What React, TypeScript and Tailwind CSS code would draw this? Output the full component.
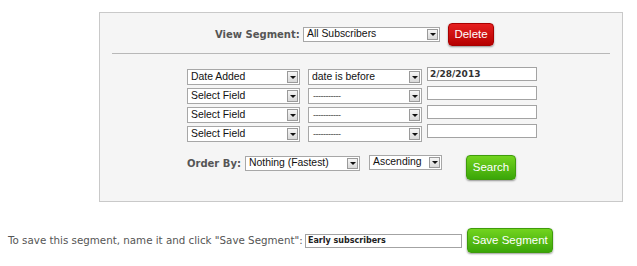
import React from "react";

function Sel({ w, h = 16, text, dash = false }: { w: number; h?: number; text: string; dash?: boolean }) {
  return (
    <div
      className="relative flex items-center border border-[#a7a7a7] bg-white box-border shrink-0"
      style={{ width: w, height: h }}
    >
      {dash ? (
        <span className="pl-[4px] text-[9px] leading-none text-[#444] tracking-[-0.5px]" style={{ fontFamily: '"Liberation Sans", Arial, sans-serif' }}>
          -----------
        </span>
      ) : (
        <span className="pl-[3px] text-[10.4px] leading-none text-[#111] whitespace-nowrap" style={{ fontFamily: '"Liberation Sans", Arial, sans-serif' }}>
          {text}
        </span>
      )}
      <div className="absolute right-[1px] top-[1px] bottom-[1px] w-[11px] border border-[#9a9a9a] bg-gradient-to-b from-[#f6f6f6] to-[#d9d9d9] flex items-center justify-center box-border">
        <div className="w-0 h-0 border-l-[3px] border-r-[3px] border-t-[3px] border-l-transparent border-r-transparent border-t-[#111]" />
      </div>
    </div>
  );
}

function Inp({ w, text }: { w: number; text?: string }) {
  return (
    <div
      className="h-[14px] border border-[#a3a3a3] bg-white box-border flex items-center shrink-0 -mt-[2px]"
      style={{ width: w }}
    >
      {text && (
        <span className="pl-[2px] text-[9px] font-bold leading-none text-[#333]" style={{ fontFamily: '"DejaVu Sans", Verdana, sans-serif' }}>
          {text}
        </span>
      )}
    </div>
  );
}

export default function App() {
  const arial = { fontFamily: '"Liberation Sans", Arial, sans-serif' };
  const verd = { fontFamily: '"DejaVu Sans", Verdana, sans-serif' };
  return (
    <div className="w-[637px] h-[266px] bg-white overflow-hidden pt-[12px]">
      <div className="ml-[99px] w-[524px] h-[190px] border border-[#c9c9c9] bg-[#f5f5f5] flex flex-col">
        <div className="flex items-center pl-[115px] mt-[10px] h-[23px]">
          <span className="text-[10px] font-bold text-[#555] whitespace-nowrap w-[84px]" style={verd}>
            View Segment:
          </span>
          <div className="ml-[4px]">
            <Sel w={137} h={15} text="All Subscribers" />
          </div>
          <div
            className="ml-[8px] w-[46px] h-[23px] rounded-[4px] border border-[#a80000] bg-gradient-to-b from-[#e61e1e] to-[#b50000] shadow-[0_1px_2px_rgba(0,0,0,0.4)] flex items-center justify-center text-white text-[11.5px]"
            style={arial}
          >
            Delete
          </div>
        </div>
        <div className="ml-[12px] w-[498px] h-px bg-[#b8b8b8] mt-[7px]" />
        <div className="flex flex-col gap-[3px] pl-[87px] mt-[15px]">
          <div className="flex items-start">
            <Sel w={113} text="Date Added" />
            <div className="ml-[8px]"><Sel w={114} text="date is before" /></div>
            <div className="ml-[5px]"><Inp w={110} text="2/28/2013" /></div>
          </div>
          {[0, 1, 2].map((i) => (
            <div key={i} className="flex items-start">
              <Sel w={113} text="Select Field" />
              <div className="ml-[8px]"><Sel w={114} text="" dash /></div>
              <div className="ml-[5px]"><Inp w={110} /></div>
            </div>
          ))}
        </div>
        <div className="flex items-start pl-[87px] mt-[13px]">
          <span className="mt-[1px] h-[15px] leading-[15px] w-[53px] text-[10px] font-bold text-[#555] whitespace-nowrap" style={verd}>
            Order By:
          </span>
          <div className="ml-[5px] mt-[1px]"><Sel w={115} h={15} text="Nothing (Fastest)" /></div>
          <div className="ml-[9px] mt-[0px]"><Sel w={73} h={15} text="Ascending" /></div>
          <div
            className="ml-[24px] w-[50px] h-[25px] rounded-[4px] border border-[#3f9c0c] bg-gradient-to-b from-[#72d41e] to-[#3aa608] shadow-[0_1px_2px_rgba(0,0,0,0.4)] flex items-center justify-center text-white text-[11.5px]"
            style={arial}
          >
            Search
          </div>
        </div>
      </div>
      <div className="flex items-center pl-[8px] mt-[26px] h-[25px]">
        <span className="w-[294px] shrink-0 text-[10.3px] text-[#555] whitespace-nowrap" style={verd}>
          To save this segment, name it and click "Save Segment":
        </span>
        <div className="ml-[3px] shrink-0 w-[157px] h-[14px] border border-[#a3a3a3] bg-white flex items-center box-border">
          <span className="pl-[2px] text-[8px] font-bold leading-none text-[#222] whitespace-nowrap" style={verd}>
            Early subscribers
          </span>
        </div>
        <div
          className="ml-[5px] shrink-0 w-[86px] h-[25px] rounded-[4px] border border-[#3f9c0c] bg-gradient-to-b from-[#72d41e] to-[#3aa608] shadow-[0_1px_2px_rgba(0,0,0,0.4)] flex items-center justify-center text-white text-[11.5px] whitespace-nowrap"
          style={arial}
        >
          Save Segment
        </div>
      </div>
    </div>
  );
}
